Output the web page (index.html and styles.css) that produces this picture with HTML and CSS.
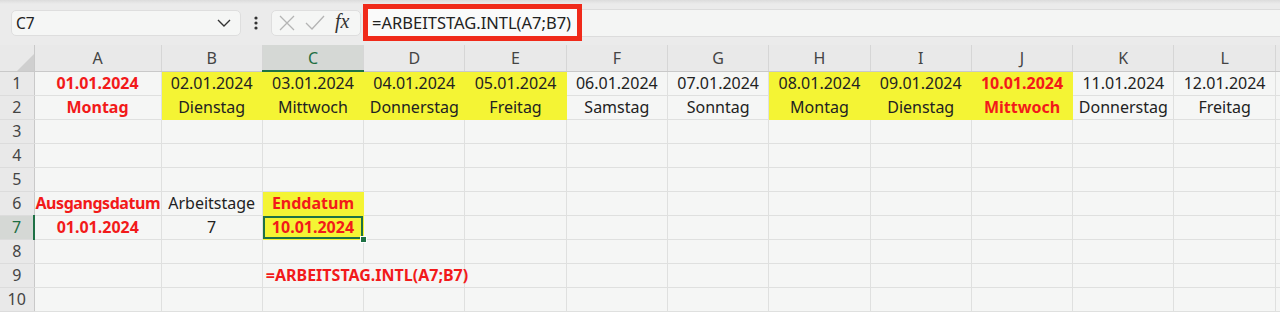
FILE: index.html
```html
<!DOCTYPE html>
<html lang="de">
<head>
  <meta charset="UTF-8">
  <title>ARBEITSTAG.INTL</title>
  <link rel="stylesheet" href="styles.css">
</head>
<body>
<div class="leiste">
  <div class="namenfeld">
    <span>C7</span>
    <svg class="pfeil" width="14" height="8" viewBox="0 0 14 8"><polyline points="1,1 7,7 13,1" fill="none" stroke="#333" stroke-width="1.4"/></svg>
  </div>
  <svg class="punkte" width="4" height="14" viewBox="0 0 4 14"><circle cx="2" cy="2" r="1.6" fill="#333"/><circle cx="2" cy="7" r="1.6" fill="#333"/><circle cx="2" cy="12" r="1.6" fill="#333"/></svg>
  <div class="aktionen">
    <svg width="16" height="16" viewBox="0 0 16 16"><path d="M1 1 L15 15 M15 1 L1 15" stroke="#b4b4b4" stroke-width="1.3" fill="none"/></svg>
    <svg width="20" height="16" viewBox="0 0 20 16"><polyline points="1,8 7,14 19,1" stroke="#b4b4b4" stroke-width="1.3" fill="none"/></svg>
    <span class="fx">fx</span>
  </div>
  <div class="formel">
    <span class="markiert">=ARBEITSTAG.INTL(A7;B7)</span>
  </div>
</div>

<table class="blatt">
  <colgroup>
    <col class="kopfspalte">
    <col class="spalte-a">
    <col><col><col><col><col><col><col><col><col><col><col>
    <col>
  </colgroup>
  <thead>
    <tr class="spaltenkoepfe">
      <th class="ecke"><svg width="17" height="17" viewBox="0 0 17 17"><polygon points="17,0 17,17 0,17" fill="#cfcfcf"/></svg></th>
      <th>A</th><th>B</th><th class="aktiv">C</th><th>D</th><th>E</th><th>F</th>
      <th>G</th><th>H</th><th>I</th><th>J</th><th>K</th><th>L</th><th></th>
    </tr>
  </thead>
  <tbody>
    <tr>
      <th>1</th>
      <td class="rot">01.01.2024</td>
      <td class="gelb">02.01.2024</td>
      <td class="gelb">03.01.2024</td>
      <td class="gelb">04.01.2024</td>
      <td class="gelb">05.01.2024</td>
      <td>06.01.2024</td>
      <td>07.01.2024</td>
      <td class="gelb">08.01.2024</td>
      <td class="gelb">09.01.2024</td>
      <td class="gelb rot">10.01.2024</td>
      <td>11.01.2024</td>
      <td>12.01.2024</td>
      <td></td>
    </tr>
    <tr>
      <th>2</th>
      <td class="rot">Montag</td>
      <td class="gelb">Dienstag</td>
      <td class="gelb">Mittwoch</td>
      <td class="gelb">Donnerstag</td>
      <td class="gelb">Freitag</td>
      <td>Samstag</td>
      <td>Sonntag</td>
      <td class="gelb">Montag</td>
      <td class="gelb">Dienstag</td>
      <td class="gelb rot">Mittwoch</td>
      <td>Donnerstag</td>
      <td>Freitag</td>
      <td></td>
    </tr>
    <tr><th>3</th><td></td><td></td><td></td><td></td><td></td><td></td><td></td><td></td><td></td><td></td><td></td><td></td><td></td></tr>
    <tr><th>4</th><td></td><td></td><td></td><td></td><td></td><td></td><td></td><td></td><td></td><td></td><td></td><td></td><td></td></tr>
    <tr><th>5</th><td></td><td></td><td></td><td></td><td></td><td></td><td></td><td></td><td></td><td></td><td></td><td></td><td></td></tr>
    <tr>
      <th>6</th>
      <td class="rot eng">Ausgangsdatum</td>
      <td>Arbeitstage</td>
      <td class="gelb rot">Enddatum</td>
      <td></td><td></td><td></td><td></td><td></td><td></td><td></td><td></td><td></td><td></td>
    </tr>
    <tr>
      <th class="aktiv">7</th>
      <td class="rot">01.01.2024</td>
      <td>7</td>
      <td class="gelb rot auswahl">10.01.2024</td>
      <td></td><td></td><td></td><td></td><td></td><td></td><td></td><td></td><td></td><td></td>
    </tr>
    <tr><th>8</th><td></td><td></td><td></td><td></td><td></td><td></td><td></td><td></td><td></td><td></td><td></td><td></td><td></td></tr>
    <tr>
      <th>9</th>
      <td></td><td></td>
      <td class="rot links" colspan="2">=ARBEITSTAG.INTL(A7;B7)</td>
      <td></td><td></td><td></td><td></td><td></td><td></td><td></td><td></td><td></td>
    </tr>
    <tr><th>10</th><td></td><td></td><td></td><td></td><td></td><td></td><td></td><td></td><td></td><td></td><td></td><td></td><td></td></tr>
    <tr><th></th><td></td><td></td><td></td><td></td><td></td><td></td><td></td><td></td><td></td><td></td><td></td><td></td><td></td></tr>
  </tbody>
</table>
</body>
</html>
```

FILE: styles.css
```css
html, body {
  margin: 0;
  padding: 0;
  overflow: hidden;
}

body {
  font-family: "Noto Sans", "Open Sans", sans-serif;
  background-color: #ebebeb;
  color: #222;
}

/* Formelleiste */
.leiste {
  height: 45px;
  display: flex;
  align-items: center;
  padding-left: 11px;
  background: linear-gradient(#dcdcdc, #ebebeb 4px);
  box-sizing: border-box;
}

.namenfeld {
  width: 230px;
  height: 26px;
  box-sizing: border-box;
  display: flex;
  align-items: center;
  justify-content: space-between;
  padding: 0 9px 0 4px;
  background-color: #f5f6f5;
  border: 1px solid #dedede;
  border-radius: 5px;
  font-size: 15.5px;
}

.punkte {
  margin: 0 13px;
}

.aktionen {
  width: 90px;
  height: 26px;
  box-sizing: border-box;
  display: flex;
  align-items: center;
  gap: 10px;
  padding-left: 7px;
  background-color: #f5f6f5;
  border: 1px solid #dedede;
  border-radius: 5px;
}

.fx {
  font-family: "Liberation Serif", serif;
  font-style: italic;
  font-size: 20px;
  color: #333;
  margin-top: -3px;
}

.formel {
  flex: 1;
  height: 26px;
  margin-left: 5px;
  display: flex;
  align-items: center;
  background-color: #f4f5f4;
  border-top: 1px solid #dcdcdc;
  border-bottom: 1px solid #dcdcdc;
}

.markiert {
  height: 37px;
  box-sizing: border-box;
  line-height: 27px;
  padding: 0 6px 0 4px;
  margin-left: -3px;
  border: 5px solid #f02a1a;
  background-color: #fafafa;
  font-size: 16.5px;
  white-space: nowrap;
}

/* Tabellenblatt */
.blatt {
  border-collapse: collapse;
  table-layout: fixed;
  width: 1376px;
  font-size: 16px;
}

.kopfspalte { width: 34px; }
.spalte-a { width: 127px; }
col { width: 101.3px; }

.blatt th {
  background-color: #e9e9e9;
  color: #444;
  font-weight: normal;
  font-size: 16px;
  padding: 0;
}

.spaltenkoepfe th {
  height: 25px;
  border-right: 1px solid #d6d6d6;
  border-bottom: 1px solid #c9c9c9;
}

.spaltenkoepfe th.ecke {
  text-align: right;
  vertical-align: bottom;
  line-height: 0;
  border-right: 1px solid #c9c9c9;
}

.spaltenkoepfe th.aktiv {
  background-color: #d5d8d5;
  color: #1e6e42;
  border-bottom: 2px solid #1e7145;
}

tbody th {
  border-right: 1px solid #c9c9c9;
  border-bottom: 1px solid #dcdcdc;
}

tbody th.aktiv {
  background-color: #d5d8d5;
  color: #1e6e42;
  border-right: 2px solid #1e7145;
}

tbody tr {
  height: 24px;
}

td {
  padding: 0 1px;
  line-height: 22px;
  text-align: center;
  white-space: nowrap;
  background-color: #f5f6f5;
  border-right: 1px solid #dfe0df;
  border-bottom: 1px solid #dfe0df;
}

td.gelb {
  background-color: #f4f434;
  border-color: #f4f434;
}

td.rot {
  color: #f21a1a;
  font-weight: bold;
}

td.eng {
  letter-spacing: -0.45px;
}

td.links {
  text-align: left;
  padding-left: 3px;
  overflow: visible;
}

td.auswahl {
  position: relative;
  box-shadow: inset 0 0 0 2px #1e7145;
}

td.auswahl::after {
  content: "";
  position: absolute;
  right: -4px;
  bottom: -4px;
  width: 5px;
  height: 5px;
  background-color: #1e7145;
  border: 1px solid #fff;
}
```
